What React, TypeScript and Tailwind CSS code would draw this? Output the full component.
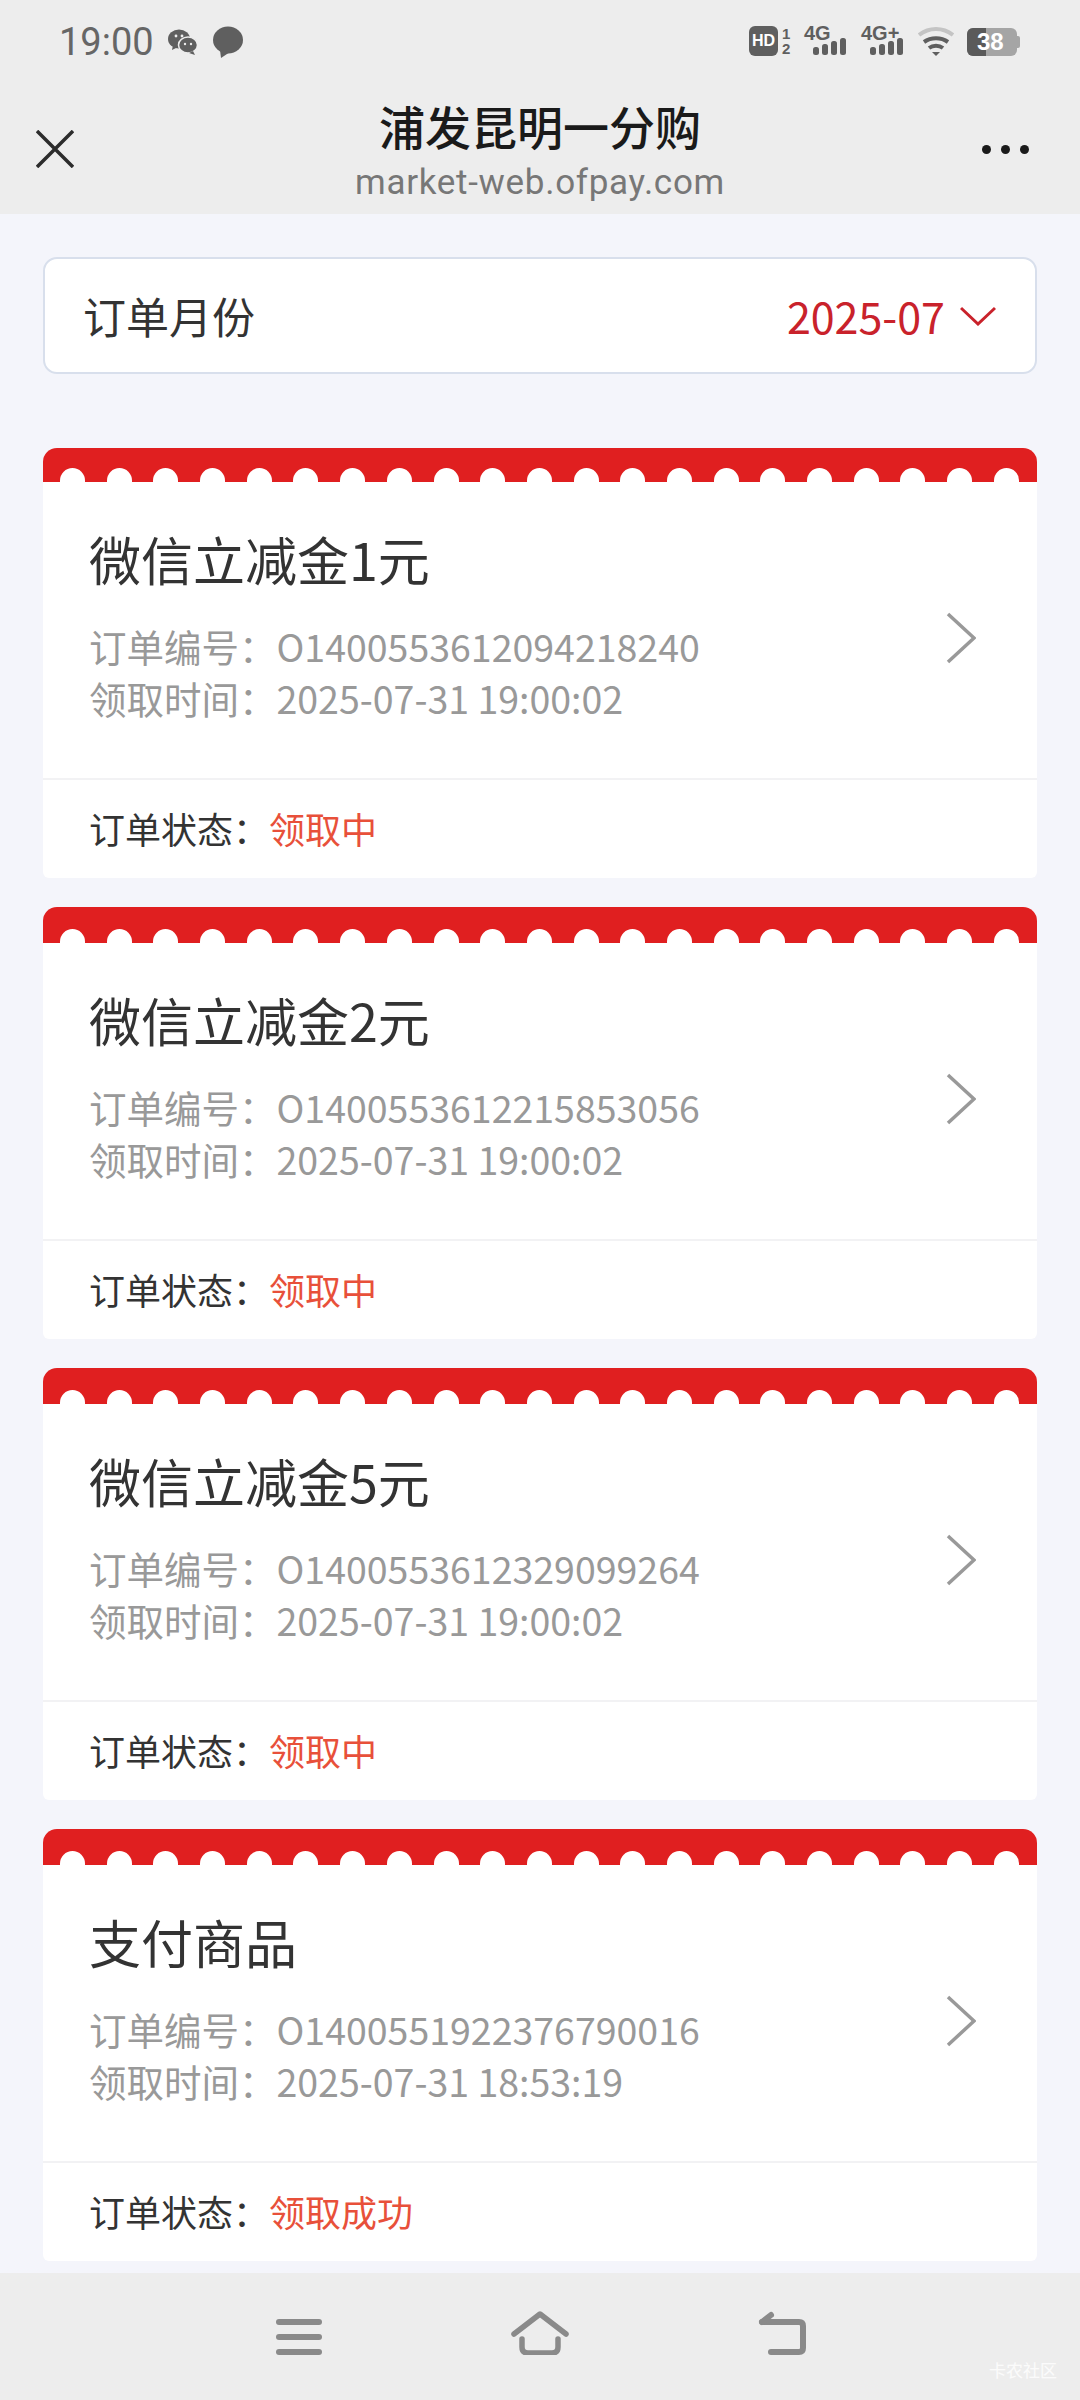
import React from 'react';

const orders = [
  { title: '微信立减金1元', no: 'O1400553612094218240', time: '2025-07-31 19:00:02', status: '领取中' },
  { title: '微信立减金2元', no: 'O1400553612215853056', time: '2025-07-31 19:00:02', status: '领取中' },
  { title: '微信立减金5元', no: 'O1400553612329099264', time: '2025-07-31 19:00:02', status: '领取中' },
  { title: '支付商品', no: 'O1400551922376790016', time: '2025-07-31 18:53:19', status: '领取成功' },
];

const dots = Array.from({ length: 21 }, (_, i) => i);

// signal bars with the network label over them
const Signal = ({ label }: { label: string }) => (
  <div className="relative w-[44px] h-[30px]">
    <span className="absolute left-0 top-[-3px] text-[20px] leading-[20px] font-bold text-[#5f5f5f] font-['Liberation_Sans',sans-serif]">{label}</span>
    <svg className="absolute left-0 top-0" width="44" height="30" viewBox="0 0 44 30">
      <rect x="9" y="21" width="6" height="8" rx="2.5" fill="#5f5f5f" />
      <rect x="18" y="18" width="6" height="11" rx="2.5" fill="#5f5f5f" />
      <rect x="27" y="15" width="6" height="14" rx="2.5" fill="#5f5f5f" />
      <rect x="36" y="12" width="6" height="17" rx="2.5" fill="#5f5f5f" />
    </svg>
  </div>
);

const OrderCard = ({ order, first }: { order: (typeof orders)[number]; first: boolean }) => (
  <div className="bg-white rounded-t-[14px] rounded-b-[6px] overflow-hidden">
    <div className={`bg-[#e01f20] flex items-end gap-[21.7px] pl-[17px] ${first ? 'h-[34px]' : 'h-[36px]'}`}>
      {dots.map((i) => (
        <div key={i} className="w-[25px] h-[14px] shrink-0 bg-white rounded-t-full" />
      ))}
    </div>
    <div className="h-[298px] pl-[46px] pr-[61px] flex items-center justify-between border-b-2 border-[#f2f2f4]">
      <div className="mb-[8px]">
        <div className="text-[52px] leading-[60px] text-[#333]">{order.title}</div>
        <div className="mt-[31px] text-[37.5px] leading-[52px] text-[#999]">
          <div>订单编号：{order.no}</div>
          <div>领取时间：{order.time}</div>
        </div>
      </div>
      <svg className="mb-[-16px]" width="30" height="52" viewBox="0 0 30 52" fill="none" stroke="#999" strokeWidth="3.5">
        <path d="M2 2l26 24L2 50" />
      </svg>
    </div>
    <div className="h-[98px] pl-[46px] pb-[2px] flex items-center text-[36px] text-[#333]">
      <span>订单状态：</span>
      <span className="text-[#e8503a]">{order.status}</span>
    </div>
  </div>
);

const App: React.FC = () => {
  return (
    <div className="h-[2400px] w-[1080px] flex flex-col bg-[#f4f5fb] font-['Noto_Sans_CJK_SC','Noto_Sans',sans-serif] overflow-hidden">
      {/* Status bar + title bar */}
      <div className="h-[214px] bg-[#ededed] shrink-0">
        <div className="h-[84px] pl-[59px] pr-[60px] pt-[26px] flex justify-between items-start">
          <div className="flex items-center gap-[14px]">
            <span className="text-[38px] leading-[32px] text-[#666] font-['Roboto',sans-serif]">19:00</span>
            <svg width="30" height="28" viewBox="0 0 30 28" fill="#5f5f5f">
              <ellipse cx="11" cy="11" rx="11" ry="9.5" />
              <path d="M5 17l-1 5 6-3z" />
              <ellipse cx="20" cy="17" rx="9.5" ry="8" stroke="#ededed" strokeWidth="1.5" />
              <path d="M25 23l2 4-6-2z" />
              <circle cx="8" cy="8" r="1.4" fill="#ededed" />
              <circle cx="14" cy="8" r="1.4" fill="#ededed" />
              <circle cx="17" cy="16" r="1.2" fill="#ededed" />
              <circle cx="23" cy="16" r="1.2" fill="#ededed" />
            </svg>
            <svg width="32" height="32" viewBox="0 0 32 32" fill="#5f5f5f">
              <ellipse cx="16" cy="14" rx="15" ry="13.5" />
              <path d="M8 24l1 8 9-6z" />
            </svg>
          </div>
          <div className="flex items-start gap-[13px]">
            <div className="flex items-start gap-[4px] w-[42px] shrink-0">
              <div className="w-[29px] h-[30px] rounded-[6px] bg-[#5f5f5f] flex items-center justify-center shrink-0 text-[16px] leading-none font-bold text-white font-['Liberation_Sans',sans-serif]">HD</div>
              <div className="flex flex-col items-center text-[15px] leading-[15px] font-bold text-[#5f5f5f] font-['Liberation_Sans',sans-serif]">
                <span>1</span>
                <span>2</span>
              </div>
            </div>
            <Signal label="4G" />
            <Signal label="4G+" />
            <svg className="mt-[1px]" width="36" height="30" viewBox="0 0 36 30" fill="none" strokeWidth="4">
              <path d="M1 8c10-8 24-8 34 0" stroke="#c4c4c4" />
              <path d="M6 15c7-5 17-5 24 0" stroke="#5f5f5f" />
              <path d="M11 21c4-3 10-3 14 0" stroke="#5f5f5f" />
              <path d="M14 25h8l-4 4z" fill="#5f5f5f" stroke="none" />
            </svg>
            <div className="relative flex items-center mt-[2px]">
              <div className="w-[50px] h-[28px] rounded-[6px] overflow-hidden flex bg-[#a5a5a5]">
                <div className="w-[19px] bg-[#5a5a5a]" />
              </div>
              <div className="w-[3px] h-[12px] bg-[#a5a5a5] rounded-r-[2px]" />
              <span className="absolute left-[10px] top-[2px] text-[24px] leading-[24px] font-bold text-white font-['Liberation_Sans',sans-serif]">38</span>
            </div>
          </div>
        </div>
        <div className="flex items-start px-[36px] h-[130px]">
          <div className="w-[120px] pt-[46px]">
            <svg width="38" height="38" viewBox="0 0 38 38" stroke="#2c2c2c" strokeWidth="3.5" fill="none">
              <path d="M1 1l36 36M37 1L1 37" />
            </svg>
          </div>
          <div className="flex-1 text-center pt-[11px]">
            <div className="text-[46px] leading-[60px] font-medium text-[#1a1a1a]">浦发昆明一分购</div>
            <div className="mt-[9px] text-[35px] leading-[38px] text-[#777] font-['Roboto',sans-serif] tracking-[0.7px]">market-web.ofpay.com</div>
          </div>
          <div className="w-[120px] pt-[61px] flex justify-end gap-[10px] pr-[15px]">
            <div className="w-[9px] h-[9px] rounded-full bg-[#1a1a1a]" />
            <div className="w-[9px] h-[9px] rounded-full bg-[#1a1a1a]" />
            <div className="w-[9px] h-[9px] rounded-full bg-[#1a1a1a]" />
          </div>
        </div>
      </div>

      <main className="flex-1 px-[43px] pt-[43px]">
        {/* Month picker */}
        <div className="h-[117px] bg-white border-2 border-[#d8dfec] rounded-[14px] pl-[38px] pr-[39px] flex items-center justify-between">
          <span className="text-[43px] text-[#333]">订单月份</span>
          <div className="flex items-center gap-[15px]">
            <span className="text-[43px] text-[#c9222b]">2025-07</span>
            <svg width="36" height="20" viewBox="0 0 36 20" fill="none" stroke="#c9222b" strokeWidth="3">
              <path d="M1 2l17 16L35 2" />
            </svg>
          </div>
        </div>

        {/* Order list */}
        <div className="mt-[74px] flex flex-col gap-[29px]">
          {orders.map((order, i) => (
            <OrderCard key={order.no} order={order} first={i === 0} />
          ))}
        </div>
      </main>

      {/* Bottom nav */}
      <div className="relative h-[127px] bg-[#ededed] shrink-0 flex items-start justify-center pt-[38px]">
        <div className="flex items-start gap-[189px]">
          <svg width="46" height="38" viewBox="0 0 46 38" fill="#8a8a8a" className="mt-[8px] ml-[2px]">
            <rect x="0" y="0" width="46" height="6" rx="3" />
            <rect x="0" y="15" width="46" height="6" rx="3" />
            <rect x="0" y="30" width="46" height="6" rx="3" />
          </svg>
          <svg width="58" height="44" viewBox="0 0 58 44" fill="none" stroke="#8a8a8a" strokeWidth="5.5" strokeLinecap="round" strokeLinejoin="round">
            <path d="M3 23L29 3l26 20" />
            <path d="M11 28v8q0 6 6 6h24q6 0 6-6v-8" />
          </svg>
          <svg width="48" height="44" viewBox="0 0 48 44" fill="none" stroke="#8a8a8a" strokeWidth="6" strokeLinecap="round" strokeLinejoin="round">
            <path d="M4 11h37q4 0 4 4v22q0 4-4 4H13" />
            <path d="M4 11l9-7" />
          </svg>
        </div>
        <span className="absolute left-[989px] top-[87px] text-[17px] leading-[20px] text-white/80">卡农社区</span>
      </div>
    </div>
  );
};

export default App;
